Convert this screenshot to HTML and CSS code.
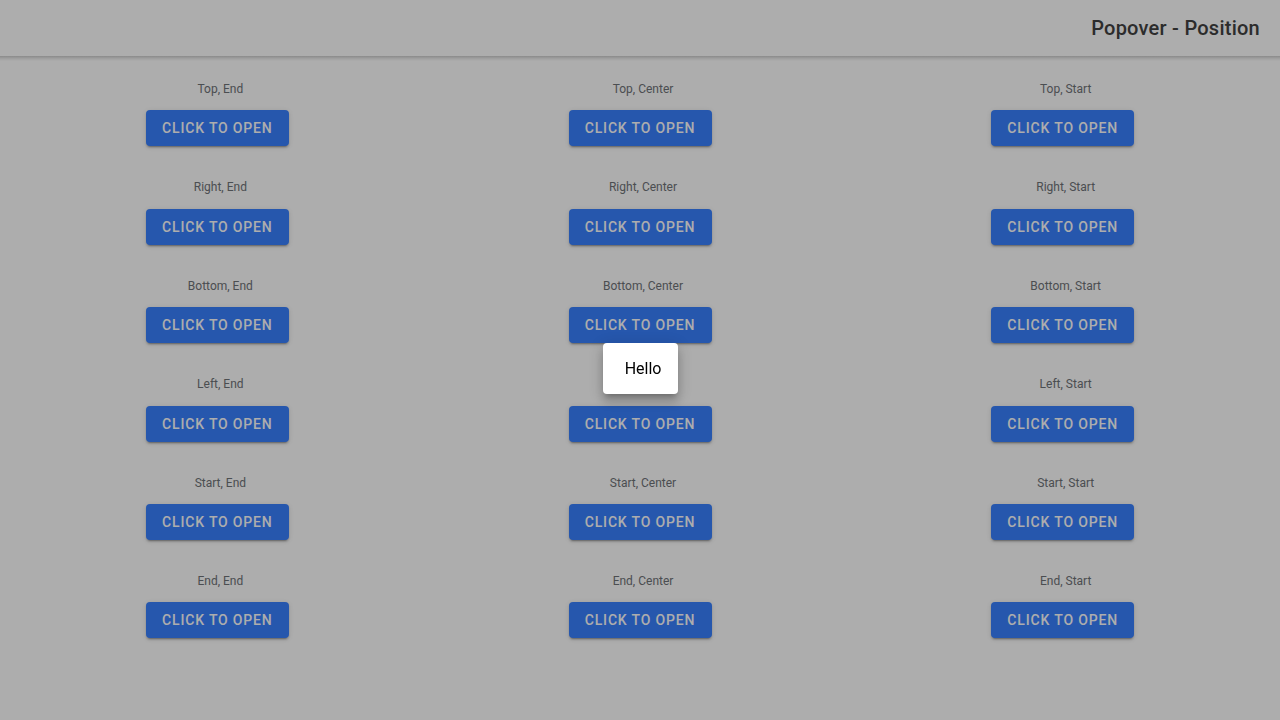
FILE: index.html
```html
<!DOCTYPE html>
<html lang="en" dir="rtl">
<head>
  <meta charset="utf-8">
  <meta name="viewport" content="width=device-width, initial-scale=1">
  <title>Popover - Position</title>
  <link rel="stylesheet" href="styles.css">
</head>
<body>
  <header class="toolbar"><h1 class="toolbar-title">Popover - Position</h1></header>
  <main class="grid">
    <section class="cell"><h2 class="label" id="l1">Top, Start</h2><button class="button" type="button" aria-describedby="l1">Click to Open</button></section>
    <section class="cell"><h2 class="label" id="l2">Top, Center</h2><button class="button" type="button" aria-describedby="l2">Click to Open</button></section>
    <section class="cell"><h2 class="label" id="l3">Top, End</h2><button class="button" type="button" aria-describedby="l3">Click to Open</button></section>

    <section class="cell"><h2 class="label" id="l4">Right, Start</h2><button class="button" type="button" aria-describedby="l4">Click to Open</button></section>
    <section class="cell"><h2 class="label" id="l5">Right, Center</h2><button class="button" type="button" aria-describedby="l5">Click to Open</button></section>
    <section class="cell"><h2 class="label" id="l6">Right, End</h2><button class="button" type="button" aria-describedby="l6">Click to Open</button></section>

    <section class="cell"><h2 class="label" id="l7">Bottom, Start</h2><button class="button" type="button" aria-describedby="l7">Click to Open</button></section>
    <section class="cell"><h2 class="label" id="l8">Bottom, Center</h2><button class="button" type="button" aria-describedby="l8">Click to Open</button></section>
    <section class="cell"><h2 class="label" id="l9">Bottom, End</h2><button class="button" type="button" aria-describedby="l9">Click to Open</button></section>

    <section class="cell"><h2 class="label" id="l10">Left, Start</h2><button class="button" type="button" aria-describedby="l10">Click to Open</button></section>
    <section class="cell"><h2 class="label" id="l11">Left, Center</h2><button class="button" type="button" aria-describedby="l11">Click to Open</button></section>
    <section class="cell"><h2 class="label" id="l12">Left, End</h2><button class="button" type="button" aria-describedby="l12">Click to Open</button></section>

    <section class="cell"><h2 class="label" id="l13">Start, Start</h2><button class="button" type="button" aria-describedby="l13">Click to Open</button></section>
    <section class="cell"><h2 class="label" id="l14">Start, Center</h2><button class="button" type="button" aria-describedby="l14">Click to Open</button></section>
    <section class="cell"><h2 class="label" id="l15">Start, End</h2><button class="button" type="button" aria-describedby="l15">Click to Open</button></section>

    <section class="cell"><h2 class="label" id="l16">End, Start</h2><button class="button" type="button" aria-describedby="l16">Click to Open</button></section>
    <section class="cell"><h2 class="label" id="l17">End, Center</h2><button class="button" type="button" aria-describedby="l17">Click to Open</button></section>
    <section class="cell"><h2 class="label" id="l18">End, End</h2><button class="button" type="button" aria-describedby="l18">Click to Open</button></section>
  </main>
  <div class="backdrop"></div>
  <div class="popover" role="dialog" aria-label="Hello">Hello</div>
</body>
</html>
```

FILE: styles.css
```css
* {
  box-sizing: border-box;
}

body {
  margin: 0;
  background: #fff;
  color: #000;
  font-family: Roboto, "Liberation Sans", sans-serif;
  font-size: 16px;
}

.toolbar {
  position: relative;
  display: flex;
  align-items: center;
  min-height: 56px;
  padding: 0 20px;
  background: #fff;
}

.toolbar::after {
  content: "";
  position: absolute;
  top: 100%;
  left: 0;
  width: 100%;
  height: 5px;
  background: linear-gradient(rgba(0, 0, 0, 0.2), rgba(0, 0, 0, 0.08) 50%, transparent);
}

.toolbar-title {
  margin: 0;
  color: #424242;
  font-size: 20px;
  font-weight: 500;
  letter-spacing: 0.0125em;
}

.grid {
  display: grid;
  grid-template-columns: repeat(3, minmax(0, 1fr));
  gap: 20px;
  padding: 16px;
}

.cell {
  display: flex;
  flex-direction: column;
  align-items: center;
}

.label {
  margin: 10px 0 10px 6px;
  color: #6f7378;
  font-size: 12px;
  font-weight: 400;
  line-height: 1.2;
}

.button {
  min-width: 143px;
  height: 36px;
  margin: 4px 0;
  padding: 0 15px;
  border: 0;
  border-radius: 4px;
  background: #3880ff;
  color: #fff;
  font-family: inherit;
  font-size: 14px;
  font-weight: 500;
  letter-spacing: 0.06em;
  text-transform: uppercase;
  box-shadow: 0 3px 1px -2px rgba(0, 0, 0, 0.2), 0 2px 2px 0 rgba(0, 0, 0, 0.14), 0 1px 5px 0 rgba(0, 0, 0, 0.12);
}

.backdrop {
  position: fixed;
  inset: 0;
  background: #000;
  opacity: 0.32;
}

.popover {
  position: absolute;
  top: 343px;
  left: 0;
  right: 0;
  width: fit-content;
  min-width: 75px;
  margin: 0 auto;
  padding: 16px;
  border-radius: 4px;
  background: #fff;
  line-height: 19px;
  box-shadow: 0 5px 5px -3px rgba(0, 0, 0, 0.2), 0 8px 10px 1px rgba(0, 0, 0, 0.14), 0 3px 14px 2px rgba(0, 0, 0, 0.12);
}
```
